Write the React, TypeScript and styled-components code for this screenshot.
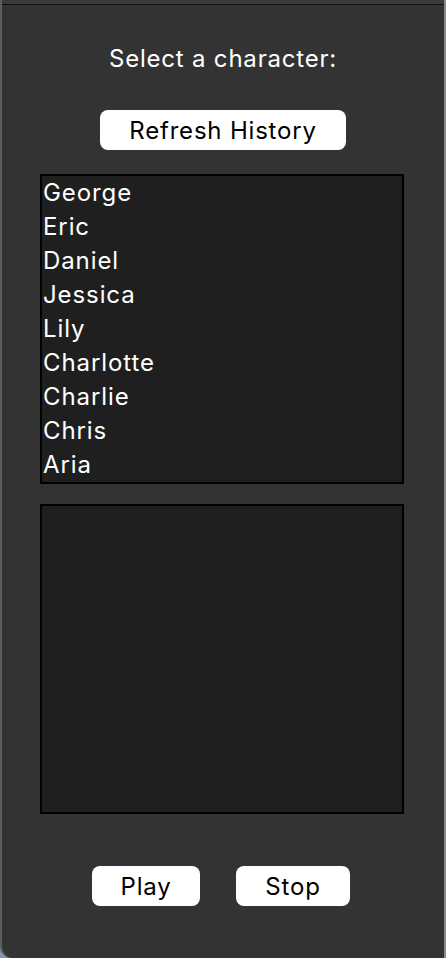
import React from "react";
import styled, { createGlobalStyle } from "styled-components";

const Global = createGlobalStyle`
  html, body { margin: 0; padding: 0; background: #7f95b2; }
  body { font-family: Inter, "Noto Sans", "Liberation Sans", sans-serif; }
  #root { width: 446px; height: 958px; }
`;

const Window = styled.div`
  box-sizing: border-box;
  width: 446px;
  height: 958px;
  background: #333333;
  border-left: 2px solid #5c5c5c;
  border-right: 2px solid #8a8a8a;
  border-bottom-left-radius: 12px;
  display: flex;
  flex-direction: column;
  align-items: center;
  overflow: hidden;
`;

const TopStrip = styled.div`
  align-self: stretch;
  height: 4px;
  background: #3b3b3b;
  border-bottom: 1px solid #111;
`;

const Title = styled.div`
  margin-top: 40px;
  color: #ffffff;
  font-size: 24px;
  line-height: 28px;
  letter-spacing: 0.8px;
  font-weight: 400;
`;

const PillButton = styled.button<{ $w: number }>`
  box-sizing: border-box;
  width: ${(p) => p.$w}px;
  height: 40px;
  border: none;
  border-radius: 8px;
  background: #ffffff;
  color: #000000;
  font-family: Inter, "Noto Sans", "Liberation Sans", sans-serif;
  font-size: 24px;
  letter-spacing: 0.8px;
  padding: 0;
  display: flex;
  align-items: center;
  justify-content: center;
`;

const RefreshRow = styled.div`
  margin-top: 37px;
  display: flex;
  justify-content: center;
`;

const Box = styled.div<{ $mt: number }>`
  box-sizing: border-box;
  margin-top: ${(p) => p.$mt}px;
  width: 364px;
  height: 310px;
  background: #1f1f1f;
  border: 2px solid #000000;
  align-self: flex-start;
  margin-left: 38px;
`;

const Item = styled.div`
  color: #ffffff;
  font-size: 24px;
  line-height: 34px;
  letter-spacing: 0.9px;
  padding-left: 1px;
  font-weight: 400;
`;

const ButtonRow = styled.div`
  margin-top: 52px;
  display: flex;
  gap: 36px;
  margin-right: 4px;
`;

const names = ["George", "Eric", "Daniel", "Jessica", "Lily", "Charlotte", "Charlie", "Chris", "Aria"];

export default function App() {
  return (
    <>
      <Global />
      <Window>
        <TopStrip />
        <Title>Select a character:</Title>
        <RefreshRow>
          <PillButton $w={246}>Refresh History</PillButton>
        </RefreshRow>
        <Box $mt={24}>
          {names.map((n) => (
            <Item key={n}>{n}</Item>
          ))}
        </Box>
        <Box $mt={20} />
        <ButtonRow>
          <PillButton $w={108}>Play</PillButton>
          <PillButton $w={114}>Stop</PillButton>
        </ButtonRow>
      </Window>
    </>
  );
}
